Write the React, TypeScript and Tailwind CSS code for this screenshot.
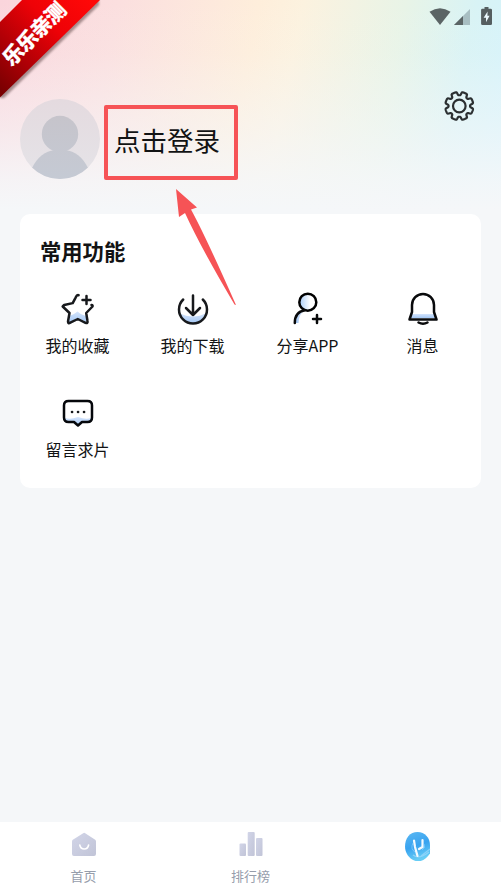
import type { ReactNode } from "react";

function gearPath(cx: number, cy: number) {
  const points: string[] = [];
  for (let i = 0; i < 160; i++) {
    const a = (i / 160) * Math.PI * 2;
    const wave = Math.tanh(-3.2 * Math.cos(8 * a) + 1.2);
    const r = 12.4 + 1.7 * wave;
    points.push(`${(cx + r * Math.cos(a)).toFixed(2)} ${(cy + r * Math.sin(a)).toFixed(2)}`);
  }
  return `M${points.join("L")}Z`;
}

function Gear() {
  return (
    <svg className="h-8 w-8" viewBox="0 0 32 32" fill="none" stroke="#2b2f31" strokeWidth="2.200" strokeLinejoin="round">
      <path d={gearPath(16.3, 16)} />
      <circle cx="16.3" cy="16" r="6.3" />
    </svg>
  );
}

function StatusBar() {
  return (
    <div className="flex h-8 justify-end pr-[9px] pt-[7px]">
      <svg className="h-[19px] w-[63px]" viewBox="0 0 63 19">
        <path d="M0.500 4.800Q11 -2.400 21.500 4.800L11 18Z" fill="#5b6465" />
        <path d="M41 2V18H25Z" fill="#a8bec2" />
        <path d="M34 9V18H25Z" fill="#5b6465" />
        <path d="M55.500 0h4v1.800h2.200q1.300 0 1.300 1.300v13.600q0 1.300-1.300 1.300h-8.300q-1.300 0-1.300-1.300V3.100q0-1.300 1.300-1.300H55.500Z" fill="#555e60" />
        <path d="M58.600 4.500L54.600 10.800H57V15.300L60.600 8.800H58.400Z" fill="#ecfaff" />
      </svg>
    </div>
  );
}

function Ribbon() {
  return (
    <>
      <svg className="absolute left-0 top-0 h-[102px] w-[104px]" viewBox="0 0 104 102">
        <defs>
          <linearGradient id="ribbon" gradientUnits="userSpaceOnUse" x1="90" y1="0" x2="0" y2="90">
            <stop offset="0" stopColor="#ff0808" />
            <stop offset=".35" stopColor="#ee0207" />
            <stop offset=".7" stopColor="#b00006" />
            <stop offset="1" stopColor="#790002" />
          </linearGradient>
          <filter id="soft"><feGaussianBlur stdDeviation=".8" /></filter>
        </defs>
        <path d="M99 0V5L4 98H0V90L90 0Z" fill="#786060" opacity=".65" filter="url(#soft)" />
        <path d="M22 0H100L0 97.500V22Z" fill="url(#ribbon)" />
      </svg>
      <div className="absolute left-[-6px] top-[24px] flex w-[78px] -rotate-45 justify-center whitespace-nowrap text-[20.5px] font-black leading-[18px] tracking-[-0.8px] text-white [-webkit-text-stroke:0.2px_white]">
        乐乐亲测
      </div>
    </>
  );
}

function Avatar() {
  return (
    <svg className="h-20 w-20 shrink-0" viewBox="0 0 80 80">
      <defs>
        <linearGradient id="face" x1="0" y1="0" x2="0" y2="1">
          <stop offset="0" stopColor="#e4dadf" />
          <stop offset="1" stopColor="#e5e4e8" />
        </linearGradient>
        <linearGradient id="person" gradientUnits="userSpaceOnUse" x1="0" y1="16" x2="0" y2="80">
          <stop offset="0" stopColor="#c6c4cb" />
          <stop offset="1" stopColor="#c5cad4" />
        </linearGradient>
        <clipPath id="disc"><circle cx="40" cy="40" r="40" /></clipPath>
      </defs>
      <circle cx="40" cy="40" r="40" fill="url(#face)" />
      <g clipPath="url(#disc)" fill="url(#person)">
        <circle cx="40" cy="35" r="18.200" />
        <path d="M12 69C17 58 26 52 34 51.200H46C54 52 63 58 68 69V80H12Z" />
      </g>
    </svg>
  );
}

function IconBox({ children }: { children: ReactNode }) {
  return (
    <svg className="h-9 w-9" viewBox="0 0 36 36" fill="none" stroke="#17191c" strokeWidth="2.500" strokeLinecap="round" strokeLinejoin="round">
      <defs>
        <linearGradient id="blue" x1="0" y1="0" x2="0" y2="1">
          <stop offset="0" stopColor="#d4e4fc" />
          <stop offset="1" stopColor="#a5c8f4" />
        </linearGradient>
        <linearGradient id="blueSide" x1="0" y1="0" x2="1" y2="0">
          <stop offset="0" stopColor="#a9ccf7" />
          <stop offset=".65" stopColor="#ffffff" />
        </linearGradient>
      </defs>
      {children}
    </svg>
  );
}

const features = [
  {
    label: "我的收藏",
    icon: (
      <IconBox>
        <path d="M9.500 26Q14 24.500 17.500 21.500Q21 25 25.800 26L26.500 32L17.800 28L9 32.500Z" fill="url(#blue)" stroke="none" />
        <path d="M18.600 5.200C16.800 4.600 16.300 6 15.500 7.800L12.700 13.100L4.200 15L2.700 16.500L9.500 23L8 31.500Q8 34 10.300 32.700L17.800 29L25.500 32.800Q28 33.500 27.500 31L26.200 23L32.500 16.500Q33 15.200 31.500 15" />
        <path d="M26.500 6V14M22.500 10H30.500" />
      </IconBox>
    ),
  },
  {
    label: "我的下载",
    icon: (
      <IconBox>
        <path d="M4.500 23Q11 26.500 18 26.500Q25 26.500 31 23Q28 33 18 33Q8 33 4.500 23Z" fill="url(#blue)" stroke="none" />
        <path d="M8.200 9.500A14 14 0 1 0 27.800 9.500M18 5.500V25M11 18L18 25L25 18" />
      </IconBox>
    ),
  },
  {
    label: "分享APP",
    icon: (
      <IconBox>
        <circle cx="17.800" cy="12.200" r="8.500" fill="url(#blueSide)" stroke="#000" />
        <path d="M4.800 33Q5 23 14 21Q8.500 25 8.500 33Z" fill="url(#blue)" stroke="none" />
        <path d="M4.800 33C4.800 25 9 21.300 14.800 20.300M27 25V33M23 29H31" stroke="#08090a" />
      </IconBox>
    ),
  },
  {
    label: "消息",
    icon: (
      <IconBox>
        <path d="M7 24H29L30.500 28H5.500Z" fill="url(#blue)" stroke="none" />
        <path d="M7 22V15A11 11 0 0 1 29 15V22L31.500 29.500H4.500ZM13.500 32.500Q18 35 22.500 32.500" stroke="#090a0c" />
      </IconBox>
    ),
  },
  {
    label: "留言求片",
    icon: (
      <IconBox>
        <path d="M5 24Q10 26 18 23Q26 26 31 24V28H22L18 32L14 28H5Z" fill="url(#blue)" stroke="none" />
        <path d="M8.500 7H27.500Q32 7 32 11.500V23.500Q32 28 27.500 28H22L18 31.500L14 28H8.500Q4 28 4 23.500V11.500Q4 7 8.500 7Z" stroke="#05070b" />
        <path d="M12 18h.1M18 18h.1M24 18h.1" strokeWidth="2.600" />
      </IconBox>
    ),
  },
];

function NavIcon({ kind }: { kind: "home" | "rank" | "profile" }) {
  return (
    <svg className="h-8 w-8" viewBox="0 0 32 32">
      <defs>
        <linearGradient id="muted" x1="0" y1="0" x2="1" y2="1">
          <stop offset="0" stopColor="#d2d5e8" />
          <stop offset="1" stopColor="#c1c4d7" />
        </linearGradient>
        <linearGradient id="orb" x1="0" y1="0" x2=".3" y2="1">
          <stop offset="0" stopColor="#5cb8f2" />
          <stop offset=".55" stopColor="#38a3f0" />
          <stop offset="1" stopColor="#67cdf5" />
        </linearGradient>
      </defs>
      {kind === "home" && (
        <g>
          <path d="M15.200 4.200Q16.200 3.400 17.200 4.200L27.200 10.800Q28 11.400 28 12.500V25Q28 27 26 27H6Q4 27 4 25V12.500Q4 11.400 4.800 10.800Z" fill="url(#muted)" />
          <path d="M11.800 16Q12.500 20 16.200 20Q19.900 20 20.600 16" fill="none" stroke="#fff" strokeWidth="1.600" strokeLinecap="round" />
        </g>
      )}
      {kind === "rank" && (
        <g fill="url(#muted)">
          <rect x="4.500" y="14.500" width="6.500" height="12.500" rx="1" />
          <rect x="12.700" y="3" width="7" height="24" rx="1" />
          <rect x="21" y="9" width="6.500" height="18" rx="1" />
        </g>
      )}
      {kind === "profile" && (
        <g transform="translate(-1 0)">
          <path d="M16.500 3C24 3 29 9 29 16V24.500Q24 32 17 32.500C8.500 31.500 4 24 4 17.500C4 9 9 3 16.500 3Z" fill="url(#orb)" />
          <path d="M12 26Q18 31 28 23M20 27L29 20" stroke="#a4dcfc" strokeWidth="1.200" fill="none" opacity=".65" />
          <path d="M13 11.500L14 18L16.500 27M21.500 11V18L18 20" stroke="#f3faff" strokeWidth="2.200" fill="none" strokeLinecap="round" />
          <path d="M12 14Q9 20 14 23M21 21Q25 19 23 15" stroke="#8ad0ff" fill="none" opacity=".7" />
        </g>
      )}
    </svg>
  );
}

const tabs: { kind: "home" | "rank" | "profile"; label: string }[] = [
  { kind: "home", label: "首页" },
  { kind: "rank", label: "排行榜" },
  { kind: "profile", label: "" },
];

export default function App() {
  return (
    <div className="relative flex h-[892px] w-[501px] flex-col bg-[#f5f7f9] font-['Noto_Sans_CJK_SC',sans-serif] text-[#121314]">
      <header className="h-[214px] shrink-0 bg-[linear-gradient(180deg,rgba(245,247,249,0)_0%,rgba(245,247,249,0.1)_25%,rgba(245,247,249,0.55)_62%,rgba(245,247,249,0.88)_85%,#f5f7f9_98%),linear-gradient(101deg,#fad5dc_0%,#fbdfdf_22%,#feeedb_48%,#fcf2df_56%,#e8f4e7_75%,#d8f3f5_88%,#d4f3fd_100%)]">
        <StatusBar />
        <div className="flex h-[182px] justify-between pl-5 pr-[26px]">
          <div className="flex items-start pt-[67px]">
            <Avatar />
            <div className="ml-1 mt-[6px] flex h-[75px] w-[134px] rounded-[2px] border-4 border-[#f65356] pl-[6px] pt-[13px] text-[26.5px] leading-[36px]">
              <span className="whitespace-nowrap">点击登录</span>
            </div>
          </div>
          <div className="pt-[58px]"><Gear /></div>
        </div>
      </header>

      <main className="flex-1">
        <section className="mx-5 h-[274px] rounded-[10px] bg-white pt-[21px]">
          <h2 className="pl-[20px] text-[21.3px] font-bold leading-[32px]">常用功能</h2>
          <div className="mt-[23px] grid grid-cols-4 pr-[1px]">
            {features.map((item) => (
              <div key={item.label} className="flex h-[104px] flex-col items-center">
                {item.icon}
                <span className="mt-[7px] whitespace-nowrap text-[16px] leading-[24px]">{item.label}</span>
              </div>
            ))}
          </div>
        </section>
      </main>

      <nav className="grid h-[70px] shrink-0 grid-cols-3 bg-white">
        {tabs.map((tab) => (
          <div key={tab.kind} className="flex flex-col items-center pt-[7px]">
            <NavIcon kind={tab.kind} />
            <span className="mt-[5px] text-[13px] leading-[20px] text-[#969dab]">{tab.label}</span>
          </div>
        ))}
      </nav>

      <Ribbon />
      <svg className="absolute left-[174px] top-[187px] h-[120px] w-[64px]" viewBox="0 0 64 120">
        <path d="M2 2L23 20.500L17 22.500Q31 48 62 118L60.500 117.500Q26 59 11 26L5 30Z" fill="#f65356" />
      </svg>
    </div>
  );
}
